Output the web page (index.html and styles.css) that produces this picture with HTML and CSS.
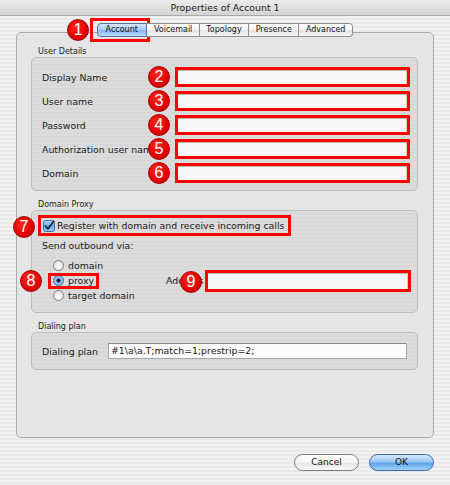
FILE: index.html
```html
<!DOCTYPE html>
<html>
<head>
<meta charset="utf-8">
<title>Properties of Account 1</title>
<link rel="stylesheet" href="styles.css">
</head>
<body>
<div class="titlebar">Properties of Account 1</div>

<div class="tabs">
  <div class="tab tab-first tab-selected">Account
    <span class="hl-box hl-tab"></span>
    <span class="badge badge-1">1</span>
  </div>
  <div class="tab">Voicemail</div>
  <div class="tab">Topology</div>
  <div class="tab">Presence</div>
  <div class="tab tab-last">Advanced</div>
</div>

<div class="pane">
  <div class="section-title">User Details</div>
  <div class="group group-user">
    <div class="row">
      <span class="row-label">Display Name</span>
      <span class="field-hl"><span class="field"></span></span>
      <span class="badge badge-row">2</span>
    </div>
    <div class="row">
      <span class="row-label">User name</span>
      <span class="field-hl"><span class="field"></span></span>
      <span class="badge badge-row">3</span>
    </div>
    <div class="row">
      <span class="row-label">Password</span>
      <span class="field-hl"><span class="field"></span></span>
      <span class="badge badge-row">4</span>
    </div>
    <div class="row">
      <span class="row-label">Authorization user name</span>
      <span class="field-hl"><span class="field"></span></span>
      <span class="badge badge-row">5</span>
    </div>
    <div class="row">
      <span class="row-label">Domain</span>
      <span class="field-hl"><span class="field"></span></span>
      <span class="badge badge-row">6</span>
    </div>
  </div>

  <div class="section-title section-gap">Domain Proxy</div>
  <div class="group group-proxy">
    <div class="check-row">
      <svg class="checkbox" width="12" height="12" viewBox="0 0 12 12">
        <defs>
          <linearGradient id="cbg" x1="0" y1="0" x2="0" y2="1">
            <stop offset="0" stop-color="#b9d8f7"/>
            <stop offset="0.5" stop-color="#6fa9e6"/>
            <stop offset="1" stop-color="#9cc8f2"/>
          </linearGradient>
        </defs>
        <rect x="0.5" y="0.5" width="11" height="11" rx="2" fill="url(#cbg)" stroke="#3f6ea6"/>
        <path d="M2.5 6.2 L5 8.8 L10.5 1.5" fill="none" stroke="#13203f" stroke-width="1.8" stroke-linecap="round" stroke-linejoin="round"/>
      </svg>
      <span>Register with domain and receive incoming calls</span>
      <span class="badge badge-7">7</span>
    </div>
    <div class="send-label">Send outbound via:</div>
    <div class="outbound">
      <div class="radios">
        <div class="radio-row">
          <span class="radio-opt"><span class="radio"></span>domain</span>
        </div>
        <div class="radio-row">
          <span class="radio-opt radio-hl"><span class="radio radio-on"></span>proxy<span class="badge badge-8">8</span></span>
        </div>
        <div class="radio-row">
          <span class="radio-opt"><span class="radio"></span>target domain</span>
        </div>
      </div>
      <div class="address">
        <span class="address-label">Address<span class="badge badge-9">9</span></span>
        <span class="field-hl field-hl-address"><span class="field field-address"></span></span>
      </div>
    </div>
  </div>

  <div class="section-title section-gap">Dialing plan</div>
  <div class="group group-dial">
    <span class="dial-label">Dialing plan</span>
    <span class="dial-field">#1\a\a.T;match=1;prestrip=2;</span>
  </div>
</div>

<div class="buttons">
  <span class="btn btn-cancel">Cancel</span>
  <span class="btn btn-ok">OK</span>
</div>
</body>
</html>
```

FILE: styles.css
```css
* { box-sizing: border-box; }

html, body {
  margin: 0;
  padding: 0;
}

body {
  width: 450px;
  height: 485px;
  overflow: hidden;
  font-family: "DejaVu Sans", sans-serif;
  font-size: 9.4px;
  color: #1a1a1a;
  background: repeating-linear-gradient(to bottom, #f1f1f1 0, #f1f1f1 2px, #e9e9e9 2px, #e9e9e9 4px);
}

.titlebar {
  height: 16px;
  line-height: 15px;
  text-align: center;
  color: #222;
  border-bottom: 1px solid #a9a9a9;
  background: linear-gradient(to bottom, #ececec, #d3d3d3);
}

/* Tabs */
.tabs {
  position: relative;
  z-index: 1;
  display: flex;
  justify-content: center;
  margin-top: 7px;
  margin-bottom: -5px;
  height: 14px;
}

.tab {
  position: relative;
  height: 14px;
  line-height: 12px;
  font-size: 8px;
  padding: 0 6.5px;
  color: #111;
  border: 1px solid #8f8f8f;
  border-left: none;
  background: linear-gradient(to bottom, #ffffff 0%, #f3f3f3 50%, #e4e4e4 51%, #f4f4f4 100%);
}

.tab-first {
  border-left: 1px solid #6d7f99;
  border-radius: 4px 0 0 4px;
  padding: 0 8.5px 0 7.5px;
}

.tab-last {
  border-radius: 0 4px 4px 0;
}

.tab-selected {
  border-color: #53759c;
  background: linear-gradient(to bottom, #d2e6fa 0%, #a7ccf2 50%, #86b7ec 51%, #b7d9f8 100%);
}

.hl-box {
  position: absolute;
  border: 3px solid #ff0000;
}

.hl-tab {
  left: -8px;
  right: -4px;
  top: -6px;
  bottom: -6px;
}

/* Badges */
.badge {
  position: absolute;
  width: 22px;
  height: 22px;
  border-radius: 50%;
  background: radial-gradient(circle at 40% 35%, #ff2a1a, #e00000 60%, #c40000);
  border: 1px solid #a30000;
  color: #fff;
  font-family: "Liberation Sans", Arial, sans-serif;
  font-size: 16px;
  line-height: 20px;
  text-align: center;
  z-index: 2;
}

.badge-1 { left: -31px; top: -5px; }

/* Pane */
.pane {
  margin: 0 16px;
  height: 406px;
  border: 1px solid #ababab;
  border-radius: 5px;
  background: #e5e5e5;
  padding: 14px 15px 0 14px;
}

.section-title {
  font-size: 8px;
  line-height: 10px;
  padding-left: 7px;
  color: #222;
}

.section-gap { margin-top: 9px; }

.group {
  border: 1px solid #bcbcbc;
  border-radius: 5px;
  background: repeating-linear-gradient(to bottom, #dcdcdc 0, #dcdcdc 2px, #d8d8d8 2px, #d8d8d8 4px);
}

.group-user {
  height: 134px;
  padding: 7px 7px 0 10px;
}

.row {
  position: relative;
  display: flex;
  align-items: center;
  height: 24px;
}

.row-label {
  width: 133px;
  flex: none;
  white-space: nowrap;
  overflow: hidden;
}

.field-hl {
  display: block;
  border: 3px solid #ff0000;
  width: 235px;
  height: 20px;
}

.field {
  display: block;
  height: 100%;
  background: #f7f7f7;
  border-top: 1px solid #b9b9b9;
  border-right: 1px solid #d0d0d0;
}

.badge-row { left: 106px; top: 1px; }

/* Domain proxy */
.group-proxy {
  height: 103px;
  padding: 4px 0 0 6px;
  position: relative;
}

.check-row {
  position: relative;
  display: flex;
  align-items: center;
  gap: 2px;
  width: 253px;
  height: 21px;
  padding-left: 2px;
  border: 3px solid #ff0000;
}

.checkbox { flex: none; }

.badge-7 { left: -28px; top: -2px; }

.send-label {
  margin: 4px 0 0 4px;
  line-height: 12px;
}

.outbound {
  display: flex;
  align-items: center;
  margin-top: 6px;
}

.radios {
  width: 128px;
  padding-left: 13px;
  flex: none;
}

.radio-row {
  height: 15px;
  display: flex;
  align-items: center;
}

.radio-opt {
  position: relative;
  display: inline-flex;
  align-items: center;
  gap: 4px;
  height: 10px;
  padding: 0 2px;
}

.radio-hl {
  outline: 3px solid #ff0000;
}

.radio {
  width: 11px;
  height: 11px;
  border-radius: 50%;
  border: 1px solid #7d7d7d;
  background: radial-gradient(circle at 50% 70%, #ffffff, #e6e6e6 70%, #cfcfcf);
  flex: none;
}

.radio-on {
  border-color: #3e6a9e;
  background: radial-gradient(circle, #15223f 0, #15223f 1.8px, #9ec9f3 2.4px, #6aa5e4 100%);
}

.badge-8 { left: -31px; top: -6px; }

.address {
  display: flex;
  align-items: center;
}

.address-label {
  position: relative;
  width: 39px;
  height: 22px;
  line-height: 22px;
  white-space: nowrap;
}

.badge-9 { left: 14px; top: 1px; }

.field-hl-address {
  width: 206px;
  height: 22px;
}

/* Dialing plan */
.group-dial {
  height: 38px;
  display: flex;
  align-items: center;
  padding-left: 10px;
}

.dial-label {
  width: 66px;
  flex: none;
}

.dial-field {
  width: 299px;
  height: 16px;
  line-height: 14px;
  padding-left: 2px;
  background: #fbfbfb;
  border: 1px solid #a6a6a6;
  border-top-color: #8a8a8a;
  white-space: nowrap;
}

/* Buttons */
.buttons {
  display: flex;
  justify-content: flex-end;
  gap: 10px;
  margin-top: 16px;
  padding-right: 16px;
}

.btn {
  width: 65px;
  height: 17px;
  line-height: 15px;
  text-align: center;
  font-size: 9px;
  border-radius: 9px;
  color: #111;
}

.btn-cancel {
  border: 1px solid #7c7c7c;
  background: linear-gradient(to bottom, #ffffff 0%, #f4f4f4 50%, #e3e3e3 51%, #fafafa 100%);
}

.btn-ok {
  border: 1px solid #3b6aa4;
  background: linear-gradient(to bottom, #d4e9fc 0%, #98c6f3 45%, #5fa3ea 55%, #9fd1fa 100%);
}
```
